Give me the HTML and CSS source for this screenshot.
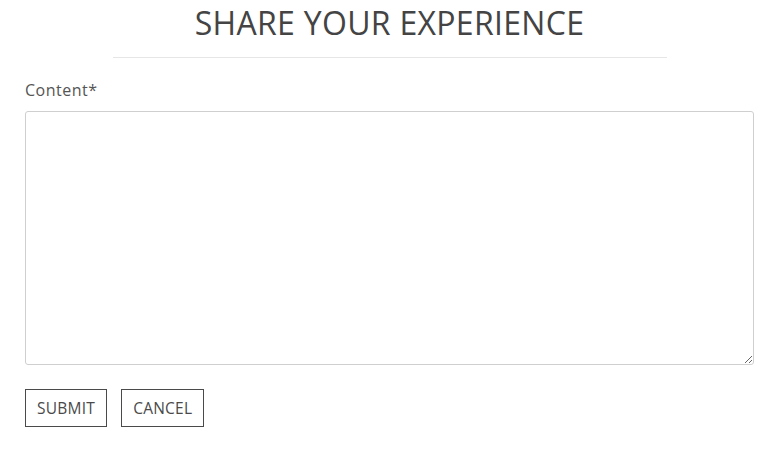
FILE: index.html
```html
<!DOCTYPE html>
<html lang="en">
<head>
<meta charset="utf-8">
<title>Share your experience</title>
<link rel="stylesheet" href="styles.css">
</head>
<body>
<main class="page">
  <h1 class="title">SHARE YOUR EXPERIENCE</h1>
  <hr class="rule">
  <form class="form">
    <label class="label" for="content">Content*</label>
    <textarea class="textarea" id="content"></textarea>
    <div class="actions">
      <button type="button" class="btn">SUBMIT</button>
      <button type="button" class="btn">CANCEL</button>
    </div>
  </form>
</main>
</body>
</html>
```
FILE: styles.css
```css
* { box-sizing: border-box; }
html, body { margin: 0; background: #fff; }
body {
  font-family: "Open Sans", "Liberation Sans", sans-serif;
  color: #4a4a4a;
}
.page {
  padding: 0 20px 0 25px;
  display: flex;
  flex-direction: column;
}
.title {
  margin: 3px 0 0;
  text-align: center;
  font-size: 32px;
  font-weight: 400;
  line-height: 40px;
  color: #444;
  letter-spacing: 0.3px;
}
.rule {
  width: 554px;
  margin: 14px auto 0;
  border: 0;
  border-top: 1px solid #e6e6e6;
  height: 0;
}
.form {
  display: flex;
  flex-direction: column;
}
.label {
  margin-top: 21px;
  font-size: 16px;
  line-height: 22px;
  letter-spacing: 0.5px;
  color: #555;
}
.textarea {
  margin-top: 10px;
  height: 254px;
  width: 100%;
  border: 1px solid #cfcfcf;
  border-radius: 3px;
  resize: vertical;
  font: inherit;
}
.actions {
  display: flex;
  gap: 14px;
  margin-top: 24px;
}
.btn {
  height: 38px;
  padding: 0 11px;
  background: #fff;
  border: 1px solid #4a4a4a;
  border-radius: 0;
  font-family: inherit;
  font-size: 15.5px;
  letter-spacing: 0.25px;
  color: #4a4a4a;
}
```
